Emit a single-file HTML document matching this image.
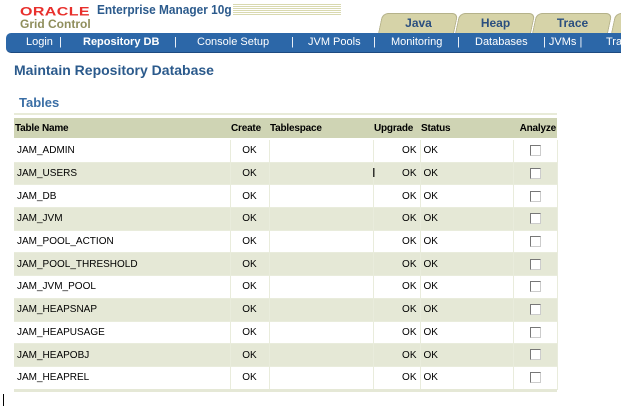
<!DOCTYPE html>
<html><head><style>
body{margin:0;width:621px;height:408px;background:#fff;position:relative;overflow:hidden;font-family:"Liberation Sans",Arial,sans-serif;}
.abs{position:absolute;white-space:nowrap}
.tab{position:absolute;top:13px;height:21px;background:#d6d3a8;border:1px solid #b5b28a;border-bottom:none;border-radius:6px 6px 0 0;transform:skewX(-12deg);}
.tabt{position:absolute;top:16px;font-weight:bold;font-size:12px;color:#2b4f7f;width:77px;text-align:center}
.nav{position:absolute;left:6px;top:33px;width:640px;height:19px;background:#2c67a8;border-radius:5px 0 0 5px;border-bottom:1px solid #1d4a80}
.nav span{position:absolute;top:3px;color:#fff;font-size:11px;white-space:nowrap}
table{position:absolute;left:14px;top:118px;border-collapse:collapse;font-size:10px;color:#000;table-layout:fixed;width:543px}
td{height:21.7px;padding:0 3px;border:1px solid #e9ecdc;border-width:0 1px 1px 0;overflow:hidden;white-space:nowrap}
th{height:20px;background:#cfd4b4;font-weight:bold;text-align:left;padding:0 1px;font-size:10px;letter-spacing:-0.2px;border-bottom:2px solid #fff;overflow:hidden;white-space:nowrap}
tr.s td{background:#e5e8d6}
.c{text-align:center}.r{text-align:right}
.a{text-align:center}
.cb{display:inline-block;width:9px;height:9px;border:1px solid #777;border-right-color:#ccc;border-bottom-color:#ccc;background:#fff;vertical-align:middle}
</style></head><body>
<div class="abs" style="left:20px;top:3px;font-size:16px;font-weight:bold;color:#e8302c;letter-spacing:0.4px;transform:scaleY(0.75);transform-origin:0 60%;">ORACLE</div>
<div class="abs" style="left:97px;top:3px;font-size:12.5px;font-weight:bold;color:#2b5a8c;transform:scaleX(0.95);transform-origin:0 0;">Enterprise Manager 10g</div>
<div class="abs" style="left:233px;top:4px;width:108px;height:11px;background:repeating-linear-gradient(#d9d9b0 0 1px,#fff 1px 2px);"></div>
<div class="abs" style="left:20px;top:17px;font-size:12px;font-weight:bold;color:#8f8e5c;">Grid Control</div>
<div class="tab" style="left:380px;width:74px"></div>
<div class="tab" style="left:457px;width:74px"></div>
<div class="tab" style="left:534px;width:74px"></div>
<div class="tab" style="left:613px;width:74px"></div>
<div class="tabt" style="left:380px">Java</div>
<div class="tabt" style="left:457px">Heap</div>
<div class="tabt" style="left:534px">Trace</div>
<div class="nav">
<span style="left:20px">Login &nbsp;|</span>
<span style="left:77px;font-weight:bold">Repository DB</span>
<span style="left:168px">|</span>
<span style="left:191px">Console Setup</span>
<span style="left:285px">|</span>
<span style="left:302px">JVM Pools</span>
<span style="left:367px">|</span>
<span style="left:385px">Monitoring</span>
<span style="left:451px">|</span>
<span style="left:469px">Databases</span>
<span style="left:537px">| JVMs |</span>
<span style="left:600px">Tra</span>
</div>
<div class="abs" style="left:14px;top:62px;font-size:14px;font-weight:bold;color:#2b5a8c;">Maintain Repository Database</div>
<div class="abs" style="left:19px;top:95px;font-size:13px;font-weight:bold;color:#3a6ea5;">Tables</div>
<div class="abs" style="left:14px;top:113px;width:543px;height:2px;background:#e8ebd8"></div>
<table>
<colgroup><col style="width:216px"><col style="width:39px"><col style="width:104px"><col style="width:47px"><col style="width:93px"><col style="width:44px"></colgroup>
<tr><th>Table Name</th><th>Create</th><th>Tablespace</th><th>Upgrade</th><th>Status</th><th class="r">Analyze</th></tr>
<tr><td>JAM_ADMIN</td><td class="c">OK</td><td></td><td class="r">OK</td><td>OK</td><td class="a"><span class="cb"></span></td></tr>
<tr class="s"><td>JAM_USERS</td><td class="c">OK</td><td></td><td class="r">OK</td><td>OK</td><td class="a"><span class="cb"></span></td></tr>
<tr><td>JAM_DB</td><td class="c">OK</td><td></td><td class="r">OK</td><td>OK</td><td class="a"><span class="cb"></span></td></tr>
<tr class="s"><td>JAM_JVM</td><td class="c">OK</td><td></td><td class="r">OK</td><td>OK</td><td class="a"><span class="cb"></span></td></tr>
<tr><td>JAM_POOL_ACTION</td><td class="c">OK</td><td></td><td class="r">OK</td><td>OK</td><td class="a"><span class="cb"></span></td></tr>
<tr class="s"><td>JAM_POOL_THRESHOLD</td><td class="c">OK</td><td></td><td class="r">OK</td><td>OK</td><td class="a"><span class="cb"></span></td></tr>
<tr><td>JAM_JVM_POOL</td><td class="c">OK</td><td></td><td class="r">OK</td><td>OK</td><td class="a"><span class="cb"></span></td></tr>
<tr class="s"><td>JAM_HEAPSNAP</td><td class="c">OK</td><td></td><td class="r">OK</td><td>OK</td><td class="a"><span class="cb"></span></td></tr>
<tr><td>JAM_HEAPUSAGE</td><td class="c">OK</td><td></td><td class="r">OK</td><td>OK</td><td class="a"><span class="cb"></span></td></tr>
<tr class="s"><td>JAM_HEAPOBJ</td><td class="c">OK</td><td></td><td class="r">OK</td><td>OK</td><td class="a"><span class="cb"></span></td></tr>
<tr><td>JAM_HEAPREL</td><td class="c">OK</td><td></td><td class="r">OK</td><td>OK</td><td class="a"><span class="cb"></span></td></tr>
</table>
<div class="abs" style="left:14px;top:389px;width:543px;height:3px;background:#e5e8d6"></div>
<div class="abs" style="left:372px;top:165px;font-size:13px;color:#000;">I</div>
<div class="abs" style="left:3px;top:394px;width:1px;height:12px;background:#000"></div>
</body></html>
